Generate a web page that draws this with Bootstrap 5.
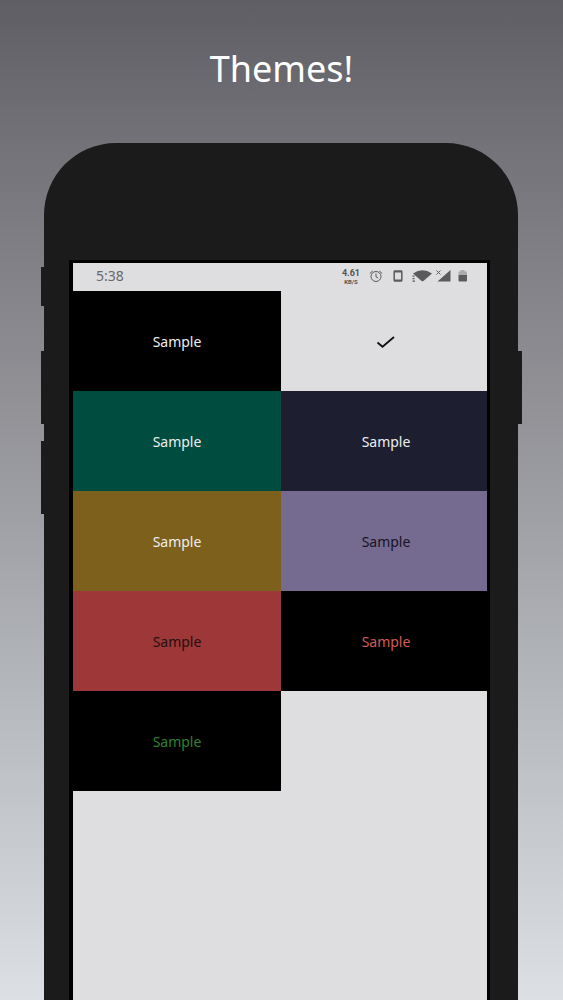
<!DOCTYPE html>
<html lang="en">
<head>
<meta charset="utf-8">
<meta name="viewport" content="width=device-width, initial-scale=1">
<title>Themes!</title>
<link href="https://cdn.jsdelivr.net/npm/bootstrap@5.3.0/dist/css/bootstrap.min.css" rel="stylesheet">
<style>
body{font-family:"Noto Sans","Open Sans",sans-serif;background:linear-gradient(#5f5e64,#747379 15%,#929297 41%,#b5b8bd 70%,#dce0e4)}
.headline{font-size:36px;line-height:48px;font-weight:400;padding-top:45px;margin-bottom:50px}
.phone{padding:0 41px}
.rail{width:4px;gap:17px;padding-top:208px}
.rail.left{width:3px;padding-top:124px}
.rail i{display:block;height:73px;background:#1b1b1c}
.rail.left i:first-child{height:39px;margin-bottom:28px}
.shell{background:#1b1b1c;border-radius:72px 72px 0 0;padding:117px 28px 0 25px}
.display{background:#dedde0;border:4px solid #000;border-width:3px 3px 0 4px}
.status{height:28px;padding:0 17px 0 23px;color:#69696c;font-size:14px;line-height:26px}
.rate{font-family:Roboto,sans-serif;font-size:9px;line-height:10px;font-weight:700;color:#555558;margin-right:8px}
.rate small{display:block;font-size:6px;line-height:8px}
.themes{display:grid;grid-template-columns:208fr 206fr;grid-auto-rows:100px}
.swatch{border:0;border-radius:0;font-size:14px;line-height:20px;padding:2px 0 0;color:#eee;background:#000}
.swatch:nth-child(even){padding-left:4px}
.light{background:#dedde0;color:#111}
.teal{background:#004d40}
.navy{background:#1d1f31}
.gold{background:#7c601b}
.violet{background:#756b91;color:#171422}
.red{background:#9e3737;color:#251010}
.coral{color:#d25b50}
.green{color:#2f8130}
</style>
</head>
<body class="min-vh-100 d-flex flex-column">
<h1 class="headline text-white text-center">Themes!</h1>
<main class="phone d-flex flex-fill">
  <div class="rail left d-flex flex-column"><i></i><i></i><i></i></div>
  <div class="shell d-flex flex-fill">
    <div class="display flex-fill">
      <div class="status d-flex justify-content-between">
        <span>5:38</span>
        <div class="d-flex align-items-center">
          <span class="rate text-center">4.61<small>KB/S</small></span>
          <svg width="102" height="18" viewBox="0 0 102 18" role="img" aria-label="Alarm, phone, Wi-Fi, no signal, battery">
            <g fill="none" stroke="#5a5a5d">
              <circle cx="8" cy="8.500" r="5" stroke-width="1"/>
              <path d="M8 5.500v3.300l2.200 1.200M1.800 5.500l3-2.600M14.200 5.500l-3-2.600" stroke-width="1"/>
              <rect x="26.200" y="3.200" width="7.600" height="9.600" rx=".6" stroke-width="1.500"/>
              <path d="M26 3.500h8M26 12.600h8" stroke-width="2"/>
              <path d="M68.500 2.500l4 4M72.500 2.500l-4 4" stroke-width="1"/>
            </g>
            <path d="M45 5.400Q54.500 -.8 64 5.400L55.400 13q-.9.600-1.800 0Z" fill="#5a5a5d"/>
            <path d="M44.500 7.500h2v1.300h-2zM44.500 10h2v1.200h-2zM44.500 12.500h2.500v1.200h-2.500zM82.500 2v11.500H69.500Z" fill="#5a5a5d"/>
            <path d="M90.500 3.500h2v-1.500h4v1.500h2.500v4h-8.500Z" fill="#aaaaad"/>
            <path d="M90.500 7h8.500v5.500q0 1-1 1h-6.500q-1 0-1-1Z" fill="#5a5a5d"/>
          </svg>
        </div>
      </div>
      <div class="themes">
        <button type="button" class="swatch">Sample</button>
        <button type="button" class="swatch light" aria-label="Selected theme"><svg width="20" height="16" viewBox="0 0 20 16" fill="none" stroke="#111" stroke-width="1.800"><path d="M1.500 7.500L6.500 11.800L18 2"/></svg></button>
        <button type="button" class="swatch teal">Sample</button>
        <button type="button" class="swatch navy">Sample</button>
        <button type="button" class="swatch gold">Sample</button>
        <button type="button" class="swatch violet">Sample</button>
        <button type="button" class="swatch red">Sample</button>
        <button type="button" class="swatch coral">Sample</button>
        <button type="button" class="swatch green">Sample</button>
      </div>
    </div>
  </div>
  <div class="rail d-flex flex-column"><i></i></div>
</main>
<script src="https://cdn.jsdelivr.net/npm/bootstrap@5.3.0/dist/js/bootstrap.bundle.min.js"></script>
</body>
</html>
